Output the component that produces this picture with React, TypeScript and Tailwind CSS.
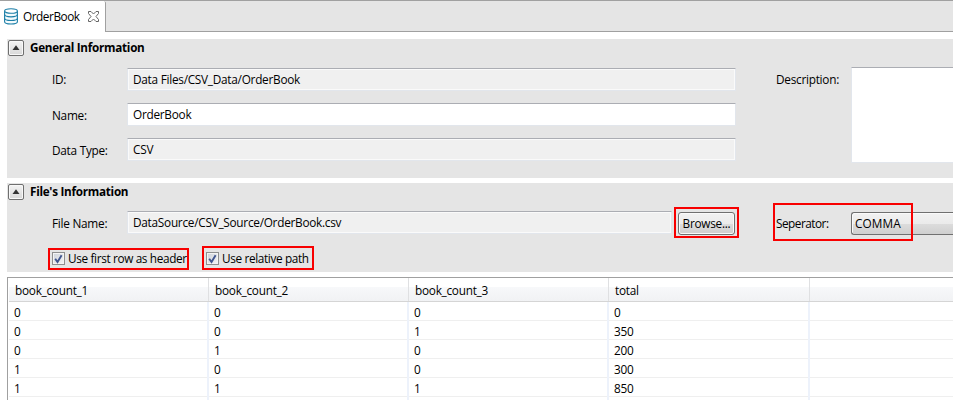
import type { ReactNode } from "react";

const rows = [
  ["0", "0", "0", "0"],
  ["0", "0", "1", "350"],
  ["0", "1", "0", "200"],
  ["1", "0", "0", "300"],
  ["1", "1", "1", "850"],
  ["", "", "", ""],
];

function SectionTitle({ children }: { children: ReactNode }) {
  return (
    <div className="flex h-[18px]">
      <div className="mt-px ml-px flex h-4 w-4 items-center justify-center rounded-[2px] border border-[#6f6f6f] bg-gradient-to-b from-[#f3f3f3] to-[#d8d8d8] shadow-[inset_0_0_0_1px_#f8f8f8]">
        <svg width="8" height="6" viewBox="0 0 8 6">
          <path d="M4 0.2 L7.5 5 H0.5 Z" fill="#333" />
        </svg>
      </div>
      <h2 className="ml-[6px] text-[11.7px] leading-[16px] font-bold tracking-[-0.27px]">{children}</h2>
    </div>
  );
}

function Field({ children, editable, className = "" }: { children: ReactNode; editable?: boolean; className?: string }) {
  return (
    <div
      className={`h-[23px] rounded-[1px] border border-[#e2e6ec] border-t-[#abadb3] pl-[5px] leading-[20px] ${
        editable ? "bg-white" : "bg-[#f0f0f0] shadow-[inset_0_0_0_1px_#fafafa]"
      } ${className}`}
    >
      {children}
    </div>
  );
}

function Check({ children }: { children: ReactNode }) {
  return (
    <label className="flex h-[13px] items-center">
      <span className="flex h-[13px] w-[13px] items-center justify-center border border-[#8e8f8f] bg-gradient-to-br from-[#cdd2da] to-[#f6f6f6] shadow-[inset_0_0_0_1px_#f4f4f4]">
        <svg width="9" height="10" viewBox="0 0 9 10">
          <path d="M1.2 4.8 L3.5 8 L7.6 1.2" fill="none" stroke="#41568f" strokeWidth="1.9" />
        </svg>
      </span>
      <span className="ml-[3px] pb-px leading-4 tracking-[-0.36px]">{children}</span>
    </label>
  );
}

export default function App() {
  return (
    <div className="relative flex h-[400px] w-[953px] flex-col overflow-hidden bg-white font-['Open_Sans','Noto_Sans',sans-serif] text-[11.8px] tracking-[-0.26px] whitespace-nowrap text-black">
      <div className="flex h-8 shrink-0 border-t border-[#a0a0a0]">
        <div className="flex w-[106px] items-center rounded-tr-[2px] border-r border-[#a0a0a0] pl-1">
          <svg width="14" height="17" viewBox="0 0 14 17" fill="none" stroke="#1d7fa8" strokeWidth="1.1">
            <path d="M0.6 3v10.8c0 3 12.8 3 12.8 0V3" fill="#f4fbfd" />
            <ellipse cx="7" cy="3" rx="6.4" ry="2.3" fill="#fff" />
            <path d="M0.6 6.6c0 3 12.8 3 12.8 0M0.6 10.2c0 3 12.8 3 12.8 0" />
          </svg>
          <span className="ml-[5px] w-[65px] pb-px leading-[28px] tracking-[-0.45px]">OrderBook</span>
          <svg width="11" height="11" viewBox="0 0 11 11" fill="none" stroke="#666">
            <path d="M.5.5h2.5l2.5 2.5L8 .5h2.5v2L8 5.5l2.5 3v2H8L5.5 8 3 10.5H.5v-2L3 5.5.5 2.5z" />
          </svg>
        </div>
        <div className="flex-1 border-b border-[#a0a0a0] bg-[#e5e5e5]" />
      </div>

      <section className="mt-[7px] ml-[7px] h-[139px] shrink-0 bg-[#e5e5e5]">
        <SectionTitle>General Information</SectionTitle>
        <div className="mt-[10px] flex">
          <div className="ml-[45px] flex w-[684px] flex-col gap-3 pt-px">
            <div className="flex">
              <span className="w-[75px] leading-[23px]">ID:</span>
              <Field className="w-[609px]">Data Files/CSV_Data/OrderBook</Field>
            </div>
            <div className="flex">
              <span className="w-[75px] leading-[25px]">Name:</span>
              <Field editable className="w-[609px]">OrderBook</Field>
            </div>
            <div className="-mt-[2px] flex">
              <span className="w-[75px] leading-[25px]">Data Type:</span>
              <Field className="w-[609px]">CSV</Field>
            </div>
          </div>
          <span className="ml-[40px] w-[75px] leading-[25px]">Description:</span>
          <div className="h-24 flex-1 border border-r-0 border-[#e2e6ec] border-t-[#abadb3] bg-white" />
        </div>
      </section>

      <section className="mt-[5px] ml-[7px] h-[89px] shrink-0 bg-[#e5e5e5]">
        <SectionTitle>File's Information</SectionTitle>
        <div className="mt-[10px] flex h-6">
          <span className="ml-[45px] w-[75px] leading-[25px]">File Name:</span>
          <Field className="w-[545px]">DataSource/CSV_Source/OrderBook.csv</Field>
          <button className="mt-px ml-[6px] h-[23px] w-[57px] rounded-[3px] border border-[#707070] bg-[linear-gradient(to_bottom,#f2f2f2,#ebebeb_50%,#dddddd_50%,#cfcfcf)] text-center leading-[21px] shadow-[inset_0_0_0_1px_#fafafa]">
            Browse...
          </button>
          <span className="ml-[41px] w-[75px] leading-[25px] tracking-[-0.5px]">Seperator:</span>
          <div className="mt-px h-[23px] flex-1 rounded-l-[3px] border border-r-0 border-[#707070] bg-[linear-gradient(to_bottom,#f2f2f2,#ebebeb_50%,#dddddd_50%,#cfcfcf)] pl-[3px] leading-[21px] tracking-[0.1px] shadow-[inset_1px_1px_0_0_#fafafa]">
            COMMA
          </div>
        </div>
        <div className="mt-[17px] ml-[45px] flex">
          <div className="w-[154px]"><Check>Use first row as header</Check></div>
          <Check>Use relative path</Check>
        </div>
      </section>

      <div className="mt-[5px] ml-[7px] h-[123px] shrink-0 overflow-hidden border-t border-l border-[#a0a0a0]">
        <div className="ml-px flex h-6 border-b border-[#d5d5d5] bg-[linear-gradient(to_bottom,#fff_40%,#f7f8fa_41%,#f1f2f4)] leading-[25px]">
          {["book_count_1", "book_count_2", "book_count_3", "total"].map((name) => (
            <div key={name} className="w-[200px] border-r border-[#dfe0e2] pl-[6px] last:w-[201px]">{name}</div>
          ))}
        </div>
        {rows.map((row, index) => (
          <div key={index} className="ml-px flex h-[19px] border-b border-[#efefef] leading-[20px]">
            {row.map((value, column) => (
              <div key={column} className="h-[19px] w-[200px] border-r-2 border-[#edf2fb] pl-[5px] last:w-[201px]">{value}</div>
            ))}
          </div>
        ))}
      </div>

      <div className="absolute top-[207px] left-[674px] h-[31px] w-[65px] border-2 border-[#f80000]" />
      <div className="absolute top-[203px] left-[773px] h-[38px] w-[140px] border-2 border-[#f80000]" />
      <div className="absolute top-[248px] left-[48px] h-[22px] w-[141px] border-2 border-[#f80000]" />
      <div className="absolute top-[246px] left-[202px] h-[24px] w-[112px] border-2 border-[#f80000]" />
    </div>
  );
}
